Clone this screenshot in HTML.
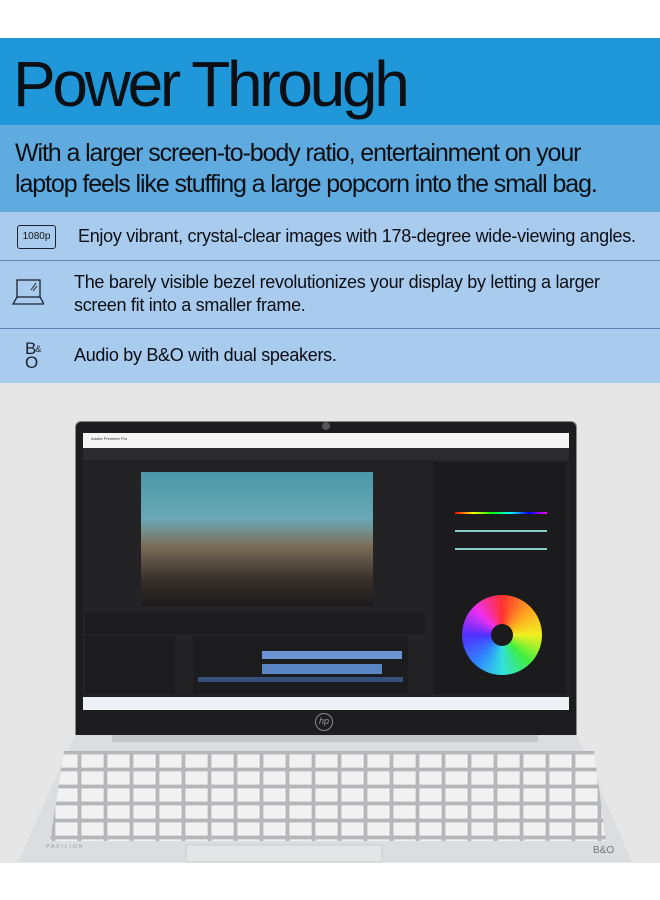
<!DOCTYPE html>
<html><head><style>
*{margin:0;padding:0;box-sizing:border-box}
body{width:660px;height:900px;background:#fff;font-family:"Liberation Sans",sans-serif;color:#111;position:relative;overflow:hidden}
.abs{position:absolute}
.h1{top:38px;left:0;width:660px;height:87px;background:#1f97d8}
.h1 span{position:absolute;left:13px;top:9px;font-size:64px;letter-spacing:-3.3px;color:#0c0f14}
.h2{top:125px;left:0;width:660px;height:87px;background:#5faadf}
.h2 p{position:absolute;left:15px;top:13px;font-size:25px;letter-spacing:-1.1px;line-height:31px;color:#0c0f14}
.rows{top:212px;left:0;width:660px;height:171px;background:#a9cbee}
.row{position:absolute;left:0;width:660px;border-bottom:1px solid #5f84ab}
.row p{position:absolute;left:74px;font-size:18px;letter-spacing:-0.3px;line-height:23px;color:#0c0f14}
.grey{top:383px;left:0;width:660px;height:480px;background:#e6e6e7}
</style></head><body>
<div class="abs h1"><span>Power Through</span></div>
<div class="abs h2"><p>With a larger screen-to-body ratio, entertainment on your<br>laptop feels like stuffing a large popcorn into the small bag.</p></div>
<div class="abs rows">
 <div class="row" style="top:0;height:49px">
  <div class="abs" style="left:17px;top:13px;width:39px;height:24px;border:1.5px solid #1a2230;border-radius:3px;font-size:10px;text-align:center;line-height:21px">1080p</div>
  <p style="top:13px;left:78px">Enjoy vibrant, crystal-clear images with 178-degree wide-viewing angles.</p>
 </div>
 <div class="row" style="top:49px;height:68px">
  <svg class="abs" style="left:12px;top:16px" width="32" height="30" viewBox="0 0 32 30"><rect x="5" y="3" width="23" height="17" fill="none" stroke="#1a2230" stroke-width="1.3"/><path d="M5 20 L1 27 H32 L28 20" fill="none" stroke="#1a2230" stroke-width="1.3"/><path d="M19 13 L24 6 M21 14 L25 9" stroke="#1a2230" stroke-width="1"/></svg>
  <p style="top:10px">The barely visible bezel revolutionizes your display by letting a larger<br>screen fit into a smaller frame.</p>
 </div>
 <div class="row" style="top:117px;height:54px;border:none">
  <div class="abs" style="left:25px;top:13px;font-size:17px;line-height:14px;letter-spacing:-1px;color:#1a2230">B<span style="font-size:9px;vertical-align:top">&amp;</span><br>O</div>
  <p style="top:15px">Audio by B&amp;O with dual speakers.</p>
 </div>
</div>
<div class="abs grey"></div>
<div class="abs" style="left:75px;top:421px;width:502px;height:316px;background:#1d1d1f;border-radius:6px 6px 0 0;border:1px solid #888"></div>
<div class="abs" style="left:322px;top:422px;width:8px;height:8px;border-radius:50%;background:#555"></div>
<div class="abs" style="left:83px;top:433px;width:486px;height:277px;background:#232325"></div>
<div class="abs" style="left:83px;top:433px;width:486px;height:15px;background:#f4f4f4;font-size:4px;padding:3px 8px;color:#333">Adobe Premiere Pro</div>
<div class="abs" style="left:83px;top:448px;width:486px;height:12px;background:#2b2b2d"></div>
<div class="abs" style="left:141px;top:472px;width:232px;height:134px;background:linear-gradient(#4a97a8 0%,#6aa8b4 35%,#7a6e5a 55%,#39302a 80%,#1a1a1a 100%)"></div>
<div class="abs" style="left:85px;top:612px;width:340px;height:22px;background:#1c1c1e"></div>
<div class="abs" style="left:85px;top:636px;width:90px;height:58px;background:#1c1c1e"></div>
<div class="abs" style="left:193px;top:636px;width:215px;height:58px;background:#1c1c1e"></div>
<div class="abs" style="left:262px;top:651px;width:140px;height:8px;background:#6b95d2"></div>
<div class="abs" style="left:262px;top:664px;width:120px;height:10px;background:#5b86c6"></div>
<div class="abs" style="left:198px;top:677px;width:205px;height:5px;background:#35507a"></div>
<div class="abs" style="left:433px;top:462px;width:133px;height:232px;background:#1b1b1d"></div>
<div class="abs" style="left:462px;top:595px;width:80px;height:80px;border-radius:50%;background:conic-gradient(#ff3030,#ffa020,#f0f020,#40f040,#30e0e0,#3080ff,#5030ff,#f030f0,#ff3030)"></div>
<div class="abs" style="left:491px;top:624px;width:22px;height:22px;border-radius:50%;background:#1b1b1d"></div>
<div class="abs" style="left:455px;top:512px;width:92px;height:2px;background:linear-gradient(90deg,red,yellow,lime,cyan,blue,magenta)"></div>
<div class="abs" style="left:455px;top:530px;width:92px;height:2px;background:#8cc"></div>
<div class="abs" style="left:455px;top:548px;width:92px;height:2px;background:#8cc"></div>
<div class="abs" style="left:83px;top:697px;width:486px;height:13px;background:#eef0f6"></div>
<div class="abs" style="left:315px;top:713px;width:18px;height:18px;border-radius:50%;border:1.5px solid #888;color:#999;font-size:9px;font-style:italic;text-align:center;line-height:15px">hp</div>
<svg class="abs" style="left:0;top:735px" width="660" height="128" viewBox="0 0 660 128">
<defs><pattern id="k" width="26" height="17" patternUnits="userSpaceOnUse" x="2" y="1"><rect x="1" y="1" width="23" height="14" fill="#f1f1f1" stroke="#a9aaab" stroke-width="0.6"/></pattern></defs>
<path d="M75 0 H577 L632 127 H18 Z" fill="#dcdddf"/><rect x="112" y="0" width="426" height="7" fill="#c4c5c6"/>
<path d="M64 16 H594 L606 106 H50 Z" fill="#b8b9ba"/>
<path d="M64 16 H594 L606 106 H50 Z" fill="url(#k)"/>
<rect x="186" y="110" width="196" height="17" fill="#e4e5e6" stroke="#c0c1c2" stroke-width="0.6"/>
<text x="46" y="113" font-size="5" fill="#999" letter-spacing="2" font-family="Liberation Sans">PAVILION</text>
<text x="593" y="118" font-size="10" fill="#777" font-family="Liberation Sans">B&amp;O</text></svg>
</body></html>
